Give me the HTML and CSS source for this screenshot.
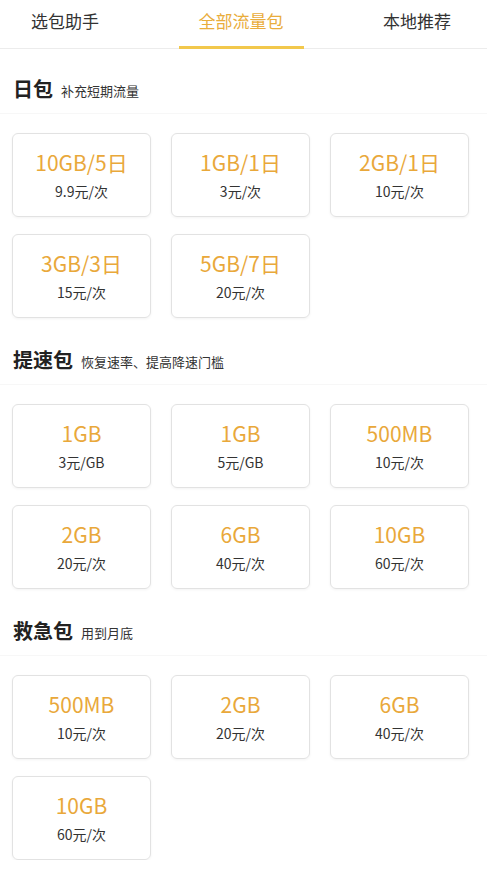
FILE: index.html
```html
<!DOCTYPE html>
<html lang="zh">
<head>
  <meta charset="UTF-8">
  <meta name="viewport" content="width=device-width, initial-scale=1.0">
  <title>全部流量包</title>
  <link rel="stylesheet" href="styles.css">
</head>
<body>
  <div class="tabs">
    <div class="tab">选包助手</div>
    <div class="tab active">全部流量包</div>
    <div class="tab">本地推荐</div>
  </div>

  <!-- 日包 -->
  <div class="section">
    <div class="section-head">
      <h2>日包</h2>
      <span class="sub">补充短期流量</span>
    </div>
    <div class="grid">
      <div class="card"><div class="amount">10GB/5日</div><div class="price">9.9元/次</div></div>
      <div class="card"><div class="amount">1GB/1日</div><div class="price">3元/次</div></div>
      <div class="card"><div class="amount">2GB/1日</div><div class="price">10元/次</div></div>
      <div class="card"><div class="amount">3GB/3日</div><div class="price">15元/次</div></div>
      <div class="card"><div class="amount">5GB/7日</div><div class="price">20元/次</div></div>
    </div>
  </div>

  <!-- 提速包 -->
  <div class="section">
    <div class="section-head">
      <h2>提速包</h2>
      <span class="sub">恢复速率、提高降速门槛</span>
    </div>
    <div class="grid">
      <div class="card"><div class="amount">1GB</div><div class="price">3元/GB</div></div>
      <div class="card"><div class="amount">1GB</div><div class="price">5元/GB</div></div>
      <div class="card"><div class="amount">500MB</div><div class="price">10元/次</div></div>
      <div class="card"><div class="amount">2GB</div><div class="price">20元/次</div></div>
      <div class="card"><div class="amount">6GB</div><div class="price">40元/次</div></div>
      <div class="card"><div class="amount">10GB</div><div class="price">60元/次</div></div>
    </div>
  </div>

  <!-- 救急包 -->
  <div class="section">
    <div class="section-head">
      <h2>救急包</h2>
      <span class="sub">用到月底</span>
    </div>
    <div class="grid">
      <div class="card"><div class="amount">500MB</div><div class="price">10元/次</div></div>
      <div class="card"><div class="amount">2GB</div><div class="price">20元/次</div></div>
      <div class="card"><div class="amount">6GB</div><div class="price">40元/次</div></div>
      <div class="card"><div class="amount">10GB</div><div class="price">60元/次</div></div>
    </div>
  </div>
</body>
</html>
```

FILE: styles.css
```css
body {
  margin: 0;
  padding: 0;
  background: #fff;
  font-family: 'Noto Sans CJK SC', 'Noto Sans', sans-serif;
  color: #333;
}

.tabs {
  display: flex;
  justify-content: space-between;
  padding: 0 16px 0 11px;
  height: 49px;
  border-bottom: 1px solid #ececec;
  box-sizing: border-box;
}

.tab {
  padding: 0 20px;
  height: 46px;
  line-height: 42px;
  font-size: 17px;
  color: #333;
  border-bottom: 3px solid transparent;
}

.tab.active {
  color: #e9ad3c;
  border-bottom-color: #f2c84c;
}

.section {
  padding-top: 15px;
}

.section + .section {
  padding-top: 17px;
}

.section-head {
  display: flex;
  align-items: center;
  height: 50px;
  box-sizing: border-box;
  padding: 0 13px;
  border-bottom: 1px solid #f7f7f7;
}

.section-head h2 {
  margin: 0;
  font-size: 20px;
  font-weight: bold;
  color: #222;
}

.section-head .sub {
  margin-left: 8px;
  font-size: 13px;
  color: #333;
  padding-top: 4px;
}

.grid {
  display: grid;
  grid-template-columns: repeat(3, 139px);
  column-gap: 20px;
  row-gap: 17px;
  padding-left: 12px;
  margin-top: 19px;
}

.card {
  height: 84px;
  box-sizing: border-box;
  border: 1px solid #e2e2e2;
  border-radius: 6px;
  box-shadow: 0 1px 3px rgba(0, 0, 0, 0.05);
  text-align: center;
  padding-top: 14px;
}

.amount {
  font-size: 21px;
  line-height: 28px;
  color: #e9a83a;
}

.price {
  font-size: 14px;
  line-height: 20px;
  margin-top: 5px;
  color: #333;
}
```
